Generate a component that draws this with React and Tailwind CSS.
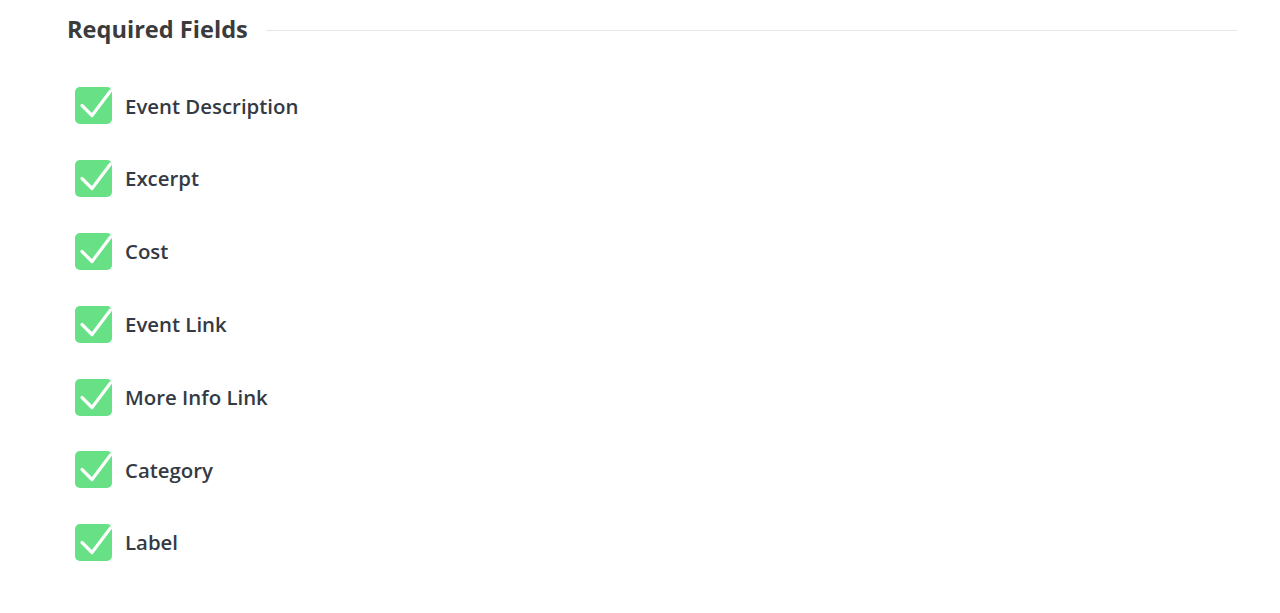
const fields = ['Event Description', 'Excerpt', 'Cost', 'Event Link', 'More Info Link', 'Category', 'Label']

const CheckBox = () => (
  <span className="flex h-[37px] w-[37px] shrink-0 rounded-[5px] bg-[#67e086]">
    <svg width="37" height="37" viewBox="0 0 37 37" fill="none" className="overflow-visible">
      <path d="M7 18.5 L17 28.5 L35.5 4" stroke="white" strokeWidth="3.2" strokeLinecap="round" strokeLinejoin="round" />
    </svg>
  </span>
)

const App = () => {
  return (
    <div className="min-h-screen bg-white font-['Open_Sans',sans-serif]">
      <div className="pl-[67px] pr-[43px] pt-[12px]">
        <div className="flex items-center gap-[18px]">
          <h2 className="text-[23.6px] font-bold text-[#3b3b3b]">Required Fields</h2>
          <div className="mt-px h-px flex-1 bg-[#e6e6e6]" />
        </div>
        <div className="mt-[40px] flex flex-col gap-[35.8px] pl-[8px]">
          {fields.map((f) => (
            <label key={f} className="flex items-center gap-[13px]">
              <CheckBox />
              <span className="text-[20.4px] font-semibold text-[#343a44]">{f}</span>
            </label>
          ))}
        </div>
      </div>
    </div>
  )
}

export default App
